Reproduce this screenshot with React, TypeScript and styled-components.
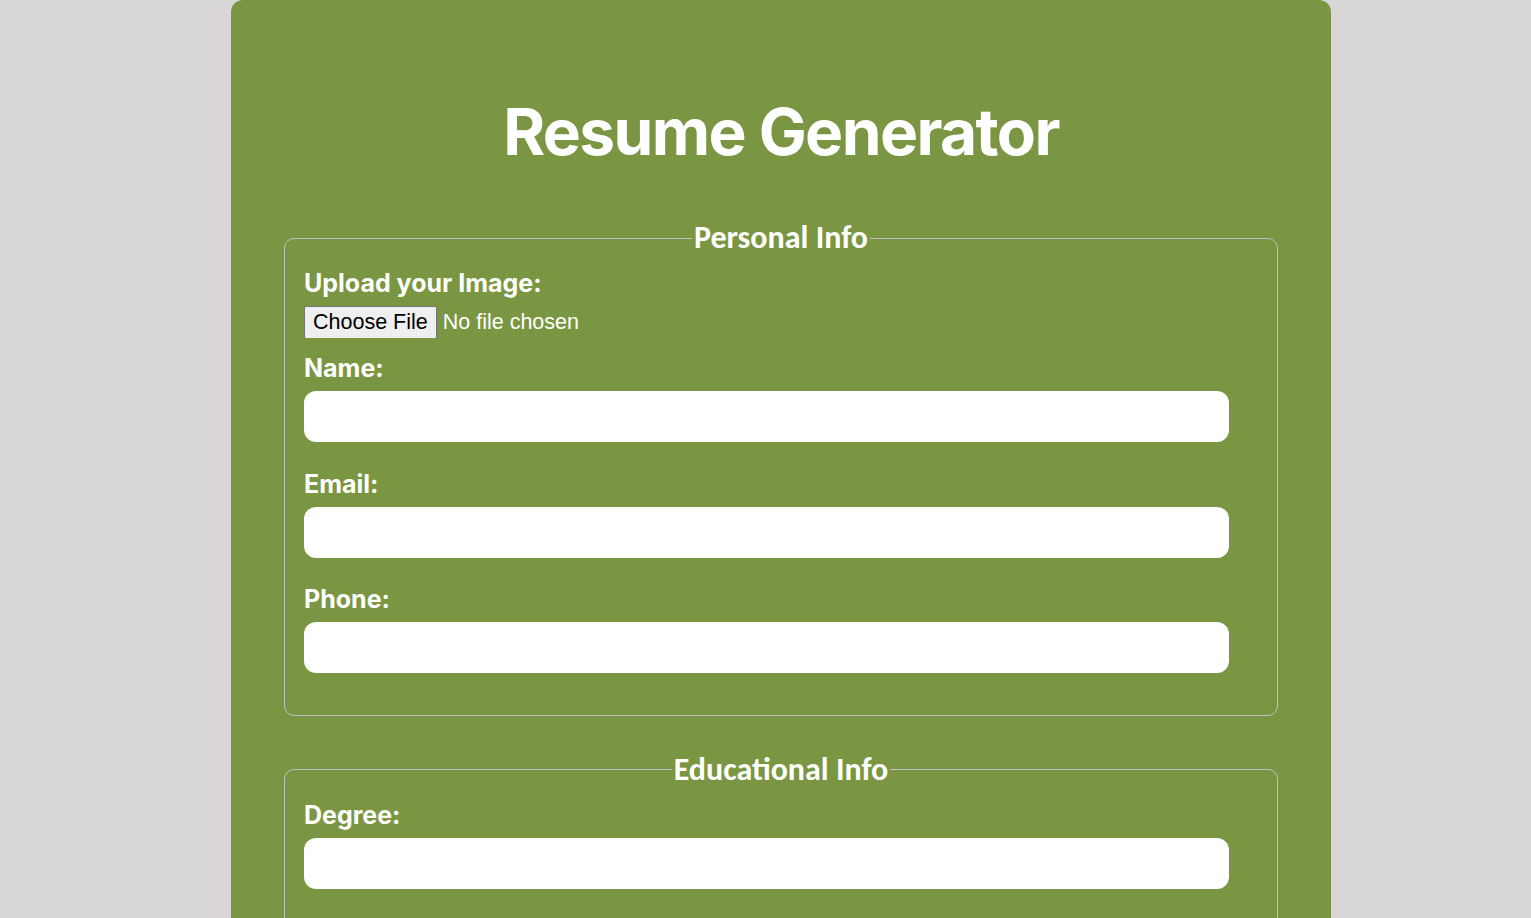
import React from "react";
import styled, { createGlobalStyle } from "styled-components";

const Global = createGlobalStyle`
  html, body { margin: 0; padding: 0; }
  body {
    background: #d9d6d6;
    font-family: Inter, "DejaVu Sans", sans-serif;
    overflow: hidden;
  }
`;

const Page = styled.div`
  display: flex;
  justify-content: flex-start;
  padding-left: 231px;
`;

const Card = styled.main`
  width: 1100px;
  min-height: 1000px;
  box-sizing: border-box;
  background: #7a9642;
  border-radius: 12px 12px 0 0;
  padding: 96px 53px 0;
  display: flex;
  flex-direction: column;
`;

const Title = styled.h1`
  margin: 0 0 54px;
  text-align: center;
  color: #ffffff;
  font-family: Inter, "DejaVu Sans", sans-serif;
  font-weight: 700;
  font-size: 64px;
  line-height: 72px;
  letter-spacing: -1.6px;
`;

const Section = styled.fieldset`
  margin: 0 0 38px;
  border: 1px solid #c3bfc6;
  border-radius: 10px;
  padding: 14px 19px 15px;
  min-width: 0;
`;

const Legend = styled.legend`
  margin: 0 auto;
  padding: 0 2px;
  color: #ffffff;
  font-family: Carlito, Lato, "Open Sans", sans-serif;
  font-weight: 700;
  font-size: 32px;
  line-height: 32px;
`;

const Label = styled.label`
  display: block;
  color: #ffffff;
  font-family: Inter, "DejaVu Sans", sans-serif;
  font-weight: 700;
  font-size: 25px;
  line-height: 30px;
  letter-spacing: 0;
  margin-bottom: 8px;
`;

const TextInput = styled.input`
  display: block;
  width: 925px;
  height: 51px;
  box-sizing: border-box;
  border: none;
  border-radius: 12px;
  background: #ffffff;
  margin: 0 0 26.5px;
  padding: 0 14px;
  font-size: 18px;
  outline: none;
`;

const FileInput = styled.input`
  display: block;
  margin: 1px 0 15px;
  color: #ffffff;
  font-family: "Liberation Sans", Arial, sans-serif;
  font-size: 21.5px;
  height: 32px;
  &::file-selector-button {
    font-family: "Liberation Sans", Arial, sans-serif;
    font-size: 21.5px;
    color: #000;
    background: #efefef;
    border: 1px solid #767676;
    border-radius: 2px;
    padding: 3px 8px;
    margin-right: 6px;
  }
`;

type FieldProps = { id: string; label: string };

const Field = ({ id, label }: FieldProps) => (
  <>
    <Label htmlFor={id}>{label}</Label>
    <TextInput id={id} type="text" />
  </>
);

export default function App() {
  return (
    <>
      <Global />
      <Page>
        <Card>
          <Title>Resume Generator</Title>
          <Section>
            <Legend>Personal Info</Legend>
            <Label htmlFor="image">Upload your Image:</Label>
            <FileInput id="image" type="file" />
            <Field id="name" label="Name:" />
            <Field id="email" label="Email:" />
            <Field id="phone" label="Phone:" />
          </Section>
          <Section>
            <Legend>Educational Info</Legend>
            <Field id="degree" label="Degree:" />
            <Field id="school" label="School:" />
          </Section>
        </Card>
      </Page>
    </>
  );
}
